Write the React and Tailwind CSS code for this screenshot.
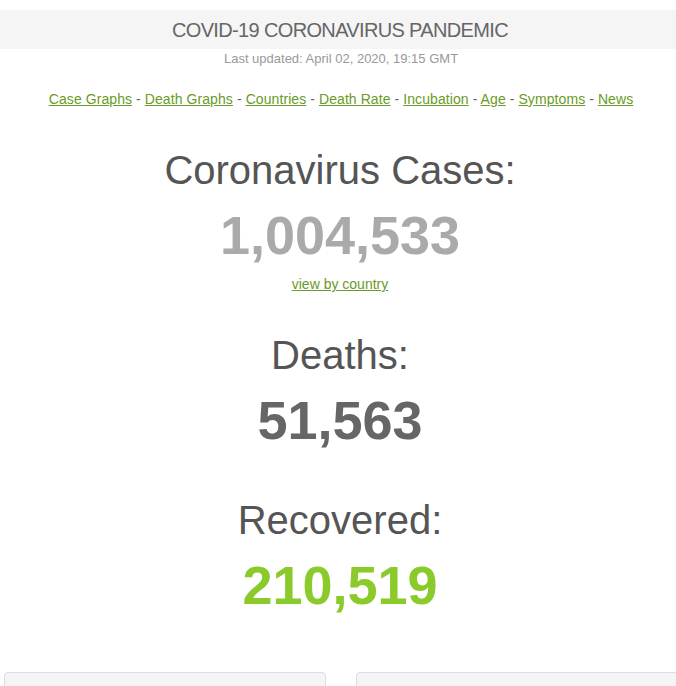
export default function App() {
  const links = ["Case Graphs", "Death Graphs", "Countries", "Death Rate", "Incubation", "Age", "Symptoms", "News"];
  return (
    <div className="w-[676px] h-[686px] overflow-hidden bg-white" style={{ fontFamily: '"Liberation Sans", Arial, sans-serif' }}>
      <div className="pt-[10px]">
        <div className="h-[39px] bg-[#f5f5f5] flex items-center justify-center">
          <span className="text-[20px] text-[#666666] tracking-[-0.65px] pl-[4px]">COVID-19 CORONAVIRUS PANDEMIC</span>
        </div>
        <div className="text-center text-[13px] text-[#999999] mt-[2px] leading-[16px] pl-[6px]">Last updated: April 02, 2020, 19:15 GMT</div>
        <div className="text-center text-[14px] text-[#666666] mt-[23px] leading-[18px] tracking-[0.08px] pl-[6px]">
          {links.map((l, i) => (
            <span key={l}>
              <a className="text-[#6a9a28] underline" href="#">{l}</a>
              {i < links.length - 1 ? " - " : ""}
            </span>
          ))}
        </div>
      </div>

      <div className="flex flex-col items-center mt-[38px]">
        <h1 className="text-[40px] leading-[48px] text-[#555555] pl-[4px]">Coronavirus Cases:</h1>
        <div className="text-[54px] leading-[62px] font-bold text-[#aaaaaa] mt-[10px] pl-[4px]">1,004,533</div>
        <a href="#" className="text-[14px] text-[#6a9a28] underline mt-[9px] leading-[18px] pl-[4px]">view by country</a>

        <h1 className="text-[40px] leading-[48px] text-[#555555] mt-[38px] pl-[4px]">Deaths:</h1>
        <div className="text-[54px] leading-[62px] font-bold text-[#666666] mt-[10px] pl-[4px]">51,563</div>

        <h1 className="text-[40px] leading-[48px] text-[#555555] mt-[45px] pl-[4px]">Recovered:</h1>
        <div className="text-[54px] leading-[62px] font-bold text-[#8ACA2B] mt-[10px] pl-[4px]">210,519</div>
      </div>

      <div className="flex gap-[30px] pl-[4px] mt-[56px]">
        <div className="w-[322px] shrink-0 h-[60px] bg-[#f5f5f5] border border-[#dddddd] rounded-[4px]"></div>
        <div className="w-[322px] shrink-0 h-[60px] bg-[#f5f5f5] border border-[#dddddd] rounded-[4px]"></div>
      </div>
    </div>
  );
}
